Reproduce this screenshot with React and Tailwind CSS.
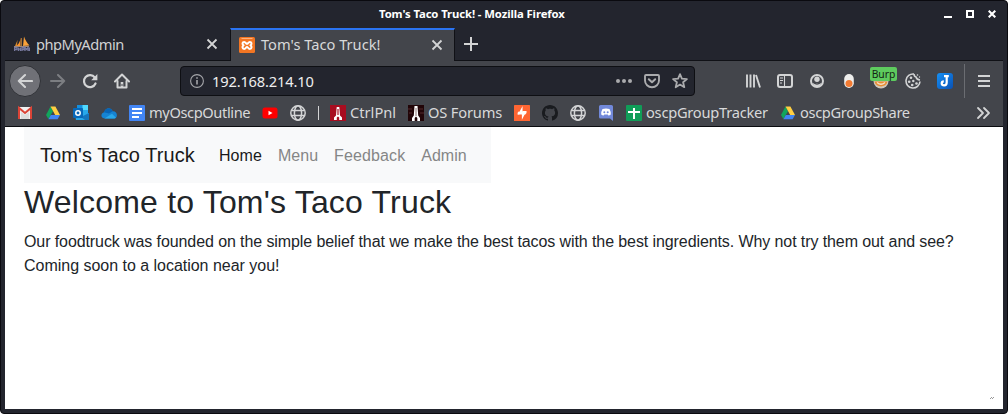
import React from "react";

function Ico({ children, className = "" }) {
  return (
    <svg viewBox="0 0 16 16" className={`block h-4 w-4 shrink-0 ${className}`} fill="none" aria-hidden="true">
      {children}
    </svg>
  );
}

const line = { stroke: "#d3d4d5", strokeWidth: 2, strokeLinecap: "round", strokeLinejoin: "round" };

const Sails = () => (
  <Ico>
    <path d="M6.5 0.5C6.8 4 5 8.5 1.5 10.5L6.5 10Z" fill="#f7922d" />
    <path d="M10 0.5C11 4 13.5 7.5 15.5 9.5L9 10Z" fill="#f9a13a" />
    <path d="M3.5 4L1 10H3Z" fill="#d78a2d" />
    <path d="M7.3 2V10" stroke="#c08038" />
    <path d="M0 10.5H15" stroke="#a58a78" strokeWidth="1" />
    <path d="M0.5 15V11.5H3V13.5H1M4.5 15V11.5M4.5 13.2H6.5M6.5 11.5V15M8 15V11.5H10V13.5H8M11 15V11.5L12.5 13.5L14 11.5V15M15.4 11.5V15" stroke="#77799e" strokeWidth="1.3" />
  </Ico>
);
const Xampp = () => (
  <Ico>
    <rect width="16" height="16" rx="1.5" fill="#f37623" />
    <path d="M2.5 1.5H13.5" stroke="#ffb27c" />
    <path d="M5.2 4.9C3.2 4.9 3 6.9 4.4 8.3C3 9.7 3.2 11.9 5.2 11.9C6.8 11.9 7 9.9 8 9.9C9 9.9 9.2 11.9 10.8 11.9C12.8 11.9 13 9.7 11.6 8.3C13 6.9 12.8 4.9 10.8 4.9C9.2 4.9 9 6.8 8 6.8C7 6.8 6.8 4.9 5.2 4.9Z" stroke="#fff" strokeWidth="2" />
  </Ico>
);
const CloseX = () => (
  <Ico><path d="M3.5 3.5L12.5 12.5M12.5 3.5L3.5 12.5" stroke="#d3d4d5" strokeWidth="1.8" /></Ico>
);
const Gmail = () => (
  <Ico>
    <rect x="1" y="2" width="14" height="12" rx="1" fill="#f1f1f1" />
    <path d="M4 14V7L8 10L12 7V14Z" fill="#dcdcdc" />
    <path d="M2 14V3L8 8L14 3V14" stroke="#db4437" strokeWidth="2" />
  </Ico>
);
const Drive = () => (
  <Ico>
    <path d="M5.5 1.5L8 6.2L3.4 14L1 10Z" fill="#11a55c" />
    <path d="M5.5 1.5H10.4L15 10H10.2Z" fill="#ffcf42" />
    <path d="M5.8 10H15L12.6 14.3H3.4Z" fill="#4185f3" />
  </Ico>
);
const Outlook = () => (
  <Ico>
    <rect x="4" y="0" width="11" height="11" fill="#1490df" />
    <rect x="9.5" y="0" width="5.5" height="5" fill="#50d9ff" />
    <rect x="9.5" y="5" width="5.5" height="4" fill="#28a8ea" />
    <path d="M2 9L16 8V15H3Z" fill="#28a8ea" />
    <path d="M8 12L16 8V15H12Z" fill="#1375bd" />
    <rect x="0" y="3" width="10" height="10" rx="1" fill="#0868b9" />
    <circle cx="5" cy="8" r="2.2" stroke="#fff" strokeWidth="1.5" />
  </Ico>
);
const Cloud = () => (
  <Ico>
    <path d="M3.5 13.4C-0.6 13.2-0.5 8 3.2 7.3C4.2 2.5 10 1.7 11.7 6.3C16.8 6 17.3 13.4 13 13.4Z" fill="#1683d2" />
    <path d="M3 7.3C4.8 2.2 10 1.9 11.7 6.3L8 8.6Z" fill="#0864b5" />
    <path d="M3.5 13.4L11 8.8L15 12.7C14.5 13.2 14 13.4 13 13.4Z" fill="#28a8ea" />
  </Ico>
);
const Docs = () => (
  <Ico>
    <rect width="16" height="16" rx="1" fill="#4285f4" />
    <path d="M3 4H13M3 8H13M3 12H10" stroke="#fff" strokeWidth="2" />
  </Ico>
);
const YouTube = () => (
  <Ico>
    <rect x="0.5" y="2.5" width="15" height="11" rx="2.5" fill="#f00" />
    <path d="M6.5 5.7L10.5 8L6.5 10.3Z" fill="#fff" />
  </Ico>
);
const Globe = () => (
  <Ico>
    <g stroke="#d3d4d5" strokeWidth="1.5">
      <circle cx="8" cy="8" r="7.2" />
      <ellipse cx="8" cy="8" rx="3.6" ry="7.2" />
      <path d="M1.5 5.5H14.5M1.5 10.5H14.5" />
    </g>
  </Ico>
);
const CtrlIcon = () => (
  <Ico>
    <rect width="16" height="16" fill="#a80d20" />
    <path d="M6.7 2H9.3L10 10.5L12 12.5V15H9.2V12.5L8 11.5L6.8 12.5V15H4V12.5L6 10.5Z" fill="#fff" />
    <path d="M8 4V10" stroke="#a80d20" strokeWidth="1.2" />
  </Ico>
);
const ForumIcon = () => (
  <Ico>
    <rect width="16" height="16" fill="#210508" />
    <path d="M0 4H4M1 8H4M11 4H15M12 8H16" stroke="#552b2d" />
    <path d="M6.5 1H9.5L10.2 10.5L12 13V16H9.3V13L8 11.5L6.7 13V16H4V13L5.8 10.5Z" fill="#fff" />
    <path d="M8 3V11" stroke="#8d7777" strokeWidth="1" />
  </Ico>
);
const Burp = () => (
  <Ico>
    <rect width="16" height="16" rx="0.6" fill="#ff6633" />
    <path d="M8.6 1V6.6H12.2L7.8 15V9.4H4Z" fill="#fff" />
    <path d="M9.2 6H12.5V8L10.8 10L9.5 8H7ZM3.6 9.8V7.8L5 6.2L6.5 8H9" fill="#fff" />
    <path d="M7 9.8V15M9.4 1V5.8" stroke="#ff6633" strokeWidth="0.8" />
  </Ico>
);
const GitHub = () => (
  <Ico>
    <path
      fill="#191b1f"
      d="M8 0C3.58 0 0 3.58 0 8c0 3.54 2.29 6.53 5.47 7.59.4.07.55-.17.55-.38 0-.19-.01-.82-.01-1.49-2.01.37-2.53-.49-2.69-.94-.09-.23-.48-.94-.82-1.13-.28-.15-.68-.52-.01-.53.63-.01 1.08.58 1.23.82.72 1.21 1.87.87 2.33.66.07-.52.28-.87.51-1.07-1.78-.2-3.64-.89-3.64-3.95 0-.87.31-1.59.82-2.15-.08-.2-.36-1.02.08-2.12 0 0 .67-.21 2.2.82.64-.18 1.32-.27 2-.27s1.36.09 2 .27c1.53-1.04 2.2-.82 2.2-.82.44 1.1.16 1.92.08 2.12.51.56.82 1.27.82 2.15 0 3.07-1.87 3.75-3.65 3.95.29.25.54.73.54 1.48 0 1.07-.01 1.93-.01 2.2 0 .21.15.46.55.38A8.01 8.01 0 0 0 16 8c0-4.42-3.58-8-8-8Z"
    />
  </Ico>
);
const Discord = () => (
  <Ico>
    <path d="M2.6 0H13.4Q15 0 15 1.6V16L12 13.6H2.6Q1 13.6 1 12V1.6Q1 0 2.6 0Z" fill="#7289da" />
    <path d="M4.5 4Q8 2.8 11.5 4Q13 6.5 12.8 9.5Q11.5 10.6 10.4 10.5L9.7 9.6H6.3L5.6 10.5Q4.5 10.6 3.2 9.5Q3 6.5 4.5 4Z" fill="#fff" />
    <circle cx="6.3" cy="7.2" r="1" fill="#7289da" />
    <circle cx="9.7" cy="7.2" r="1" fill="#7289da" />
  </Ico>
);
const Sheets = () => (
  <Ico>
    <rect width="16" height="16" rx="1" fill="#109d58" />
    <path d="M8 3V14M2 7H14" stroke="#fff" strokeWidth="2" />
  </Ico>
);

function Bookmark({ icon, label, className = "" }) {
  return (
    <div className={`flex shrink-0 items-center gap-1 ${className}`}>
      {icon}
      {label && <span className="-mt-[3px] whitespace-nowrap text-[14.67px] leading-5 text-[#d8d9da]">{label}</span>}
    </div>
  );
}

function TitleBar() {
  return (
    <header className="flex h-[27px] items-center pr-[7px] pl-[374px]">
      <h1 className="-mt-px text-[11.3px] leading-4 font-bold tracking-[-0.09px] whitespace-nowrap text-white">Tom's Taco Truck! - Mozilla Firefox</h1>
      <div className="-mt-px ml-auto flex gap-[14px]">
        <svg className="h-2 w-2" viewBox="0 0 8 8"><path d="M0 7H8" stroke="#fff" strokeWidth="2" /></svg>
        <svg className="h-2 w-2" viewBox="0 0 8 8"><path d="M1 1H7V7H1Z" fill="none" stroke="#fff" strokeWidth="2" /></svg>
        <svg className="h-2 w-2" viewBox="0 0 8 8"><path d="M0.7 0.7L7.3 7.3M7.3 0.7L0.7 7.3" stroke="#fff" strokeWidth="2.1" /></svg>
      </div>
    </header>
  );
}

function Tabs() {
  return (
    <div className="flex h-[33px] bg-[#23252e] text-[14.67px]">
      <div className="flex w-[225px] items-center border-b border-[#101116] pr-[10px] pl-[9px]">
        <Sails />
        <span className="ml-[6px] flex-1 tracking-[-0.5px] text-[#d0d1d3]">phpMyAdmin</span>
        <CloseX />
      </div>
      <div className="flex w-[225px] items-center border-t-2 border-r border-l border-t-[#2b74f2] border-r-[#101116] border-l-[#101116] bg-[#43454b] pr-[9px] pb-px pl-[8px]">
        <Xampp />
        <span className="-mt-[2px] ml-[6px] flex-1 text-[#d8d9da]">Tom's Taco Truck!</span>
        <CloseX />
      </div>
      <div className="flex flex-1 items-center border-b border-[#101116] pl-[8px]">
        <Ico><path d="M8 1V15M1 8H15" stroke="#d3d4d5" strokeWidth="2" /></Ico>
      </div>
    </div>
  );
}

function AddressBar() {
  return (
    <div className="flex h-[30px] w-[515px] items-center rounded-[4px] border border-[#0e0f13] bg-[#23252e] pr-[6px] pl-[8px]">
      <Ico>
        <circle cx="8" cy="8" r="6.4" stroke="#a5a6aa" strokeWidth="1.1" />
        <path d="M8 7V11.5M8 4.2V5.8" stroke="#a5a6aa" strokeWidth="1.6" />
      </Ico>
      <span className="ml-[7px] flex-1 text-[14.67px] tracking-[-0.17px] text-[#eeeeee]">192.168.214.10</span>
      <div className="flex gap-3">
        <Ico>
          <g fill="#aaabad"><circle cx="2" cy="8" r="2" /><circle cx="8" cy="8" r="2" /><circle cx="14" cy="8" r="2" /></g>
        </Ico>
        <Ico>
          <path d="M1 3Q1 2 2 2H14Q15 2 15 3V7.5A7 6.7 0 0 1 1 7.5Z" stroke="#aaabad" strokeWidth="1.9" />
          <path d="M4.8 6.2L8 9.2L11.2 6.2" stroke="#aaabad" strokeWidth="2" strokeLinecap="round" strokeLinejoin="round" />
        </Ico>
        <Ico>
          <path d="M8 1.2L9.9 5.7L14.9 6.1L11.1 9.3L12.3 14.2L8 11.6L3.7 14.2L4.9 9.3L1.1 6.1L6.1 5.7Z" stroke="#aaabad" strokeWidth="1.8" strokeLinejoin="round" />
        </Ico>
      </div>
    </div>
  );
}

function Toolbar() {
  return (
    <div className="flex h-10 items-center pl-1">
      <div className="flex h-8 w-8 items-center justify-center rounded-full border border-[#303237] bg-[#707177]">
        <Ico><path d="M15 8H1.8M8 2L1.8 8L8 14" {...line} strokeWidth="2.1" /></Ico>
      </div>
      <div className="ml-[9px] flex gap-4">
        <Ico className="opacity-40"><path d="M1 8H14.2M8 2L14.2 8L8 14" {...line} /></Ico>
        <Ico>
          <path d="M12.8 4.5A6 6 0 1 0 13.5 10.5" {...line} strokeWidth="2.2" />
          <path d="M15.4 1V7.2H9.2Z" fill="#d3d4d5" />
        </Ico>
        <Ico>
          <path d="M1 8.5L8 1.5L15 8.5" {...line} />
          <path d="M3.5 8V14.5H12.5V8" {...line} />
          <path d="M8 9V14" stroke="#d3d4d5" strokeWidth="2.6" />
          <path d="M8 11V13" stroke="#43454b" strokeWidth="1" />
        </Ico>
      </div>
      <div className="ml-[50px]"><AddressBar /></div>
      <div className="ml-[50px] flex gap-4">
        <Ico><path d="M2 1.5V14.5M5.5 1.5V14.5M9 1.5V14.5M11 2L15 14.5" stroke="#d3d4d5" strokeWidth="1.9" /></Ico>
        <Ico>
          <rect x="1" y="2" width="14" height="12" rx="2" stroke="#d3d4d5" strokeWidth="2" />
          <path d="M7.5 2V14M3 5H6M3 7.5H6M3 10H5" stroke="#d3d4d5" strokeWidth="1.1" />
        </Ico>
        <Ico>
          <circle cx="8" cy="8" r="6" stroke="#d3d4d5" strokeWidth="2" />
          <circle cx="8" cy="6.2" r="2.7" fill="#d3d4d5" />
          <path d="M3.5 10H12.5Q11 13.5 8 13.5Q5 13.5 3.5 10Z" fill="#d3d4d5" />
          <path d="M4.5 9.8Q8 12.2 11.5 9.8" stroke="#43454b" strokeWidth="1.3" />
        </Ico>
        <Ico>
          <rect x="3.2" y="1" width="9.6" height="14" rx="4.8" fill="#eeeeec" />
          <circle cx="8" cy="10.5" r="3.5" fill="#f47b32" />
        </Ico>
        <div className="relative h-4 w-4">
          <Ico>
            <circle cx="8" cy="8" r="7.5" fill="#cfc7bb" />
            <path d="M1.5 8.5C3 15 13 15 14.5 8.5Z" fill="#e98b30" />
            <path d="M4 9.5Q8 13 12 9.5" stroke="#f4e2c9" strokeWidth="1.5" />
          </Ico>
          <span className="absolute -top-[6px] -left-[3px] flex h-[14px] w-[27px] items-center justify-center rounded-[2px] bg-[#5ecb5e] text-[10.3px] leading-none text-[#142414]">Burp</span>
        </div>
        <Ico>
          <path d="M9 1.1A7 7 0 1 0 15 8.5M9 1.1Q9 3.5 11 4Q11.5 6.5 15 7" stroke="#d3d4d5" strokeWidth="1.6" />
          <g fill="#d3d4d5">
            <circle cx="6" cy="4.8" r="1.3" /><circle cx="4.2" cy="8.8" r="1.3" /><circle cx="8.3" cy="8" r="1.2" />
            <circle cx="7.2" cy="12" r="1.3" /><circle cx="11.5" cy="10.5" r="1.3" /><circle cx="12.5" cy="2" r="0.8" /><circle cx="14.5" cy="4" r="0.7" />
          </g>
        </Ico>
        <Ico>
          <defs>
            <linearGradient id="noteBlue" x1="0" y1="0" x2="1" y2="1">
              <stop offset="0" stopColor="#1590f5" />
              <stop offset="1" stopColor="#0a51b4" />
            </linearGradient>
          </defs>
          <rect width="16" height="16" rx="3" fill="url(#noteBlue)" />
          <path d="M7 3.2H11.8M9.7 3V9.6Q9.7 12.4 7.2 12.4Q4.7 12.4 4.7 10.2Q4.7 8.3 6.8 8.3" stroke="#fff" strokeWidth="2.2" />
        </Ico>
      </div>
      <div className="ml-[11px] h-[34px] w-px bg-[#6b6d72]" />
      <Ico className="ml-[11px]"><path d="M2 3H14M2 8H14M2 13H14" stroke="#d3d4d5" strokeWidth="2" /></Ico>
    </div>
  );
}

function Bookmarks() {
  return (
    <div className="flex h-[26px] items-center gap-3 border-b border-[#0b0c10] pr-[12px] pb-px pl-3">
      <Bookmark icon={<Gmail />} />
      <Bookmark icon={<Drive />} />
      <Bookmark icon={<Outlook />} />
      <Bookmark icon={<Cloud />} />
      <Bookmark icon={<Docs />} label="myOscpOutline" className="w-[121px] tracking-[-0.4px]" />
      <Bookmark icon={<YouTube />} />
      <Bookmark icon={<Globe />} />
      <div className="-mr-px h-[14px] w-px bg-[#d3d4d5]" />
      <Bookmark icon={<CtrlIcon />} label="CtrlPnl" className="w-[66px]" />
      <Bookmark icon={<ForumIcon />} label="OS Forums" className="w-[94px] tracking-[-0.17px]" />
      <Bookmark icon={<Burp />} />
      <Bookmark icon={<GitHub />} />
      <Bookmark icon={<Globe />} />
      <Bookmark icon={<Discord />} />
      <Bookmark icon={<Sheets />} label="oscpGroupTracker" className="w-[142px] tracking-[-0.25px]" />
      <Bookmark icon={<Drive />} label="oscpGroupShare" className="tracking-[-0.35px]" />
      <Ico className="ml-auto"><path d="M3 3L8 8L3 13M9 3L14 8L9 13" {...line} strokeWidth="1.8" /></Ico>
    </div>
  );
}

function Page() {
  return (
    <main className="flex-1 bg-white px-[19px] font-['Liberation_Sans',Arial,sans-serif] text-[#212529]">
      <nav className="flex h-14 w-[467px] items-center bg-[#f8f9fa] px-4">
        <a className="mr-4 text-[20px] leading-[30px] tracking-[0.09px] text-[#1a1a1a]">Tom's Taco Truck</a>
        <div className="flex pt-[2px] text-base text-[#858686]">
          <a className="px-2 tracking-[0.1px] text-[#1a1a1a]">Home</a>
          <a className="px-2">Menu</a>
          <a className="px-2 tracking-[0.12px]">Feedback</a>
          <a className="px-2">Admin</a>
        </div>
      </nav>
      <h2 className="mb-[9px] text-[32px] leading-[38.4px] tracking-[0.185px]">Welcome to Tom's Taco Truck</h2>
      <p className="text-base leading-6 tracking-[-0.093px]">
        Our foodtruck was founded on the simple belief that we make the best tacos with the best ingredients. Why not try them out and see?
        <br />
        <span className="tracking-[-0.02px]">Coming soon to a location near you!</span>
      </p>
    </main>
  );
}

export default function App() {
  return (
    <div className="h-[414px] w-[1008px] bg-white">
      <div className="relative flex h-full flex-col overflow-hidden rounded-[4px] border border-[#0a0a0f] bg-[#23252e] px-1 pb-1 font-['Noto_Sans',sans-serif]">
        <TitleBar />
        <Tabs />
        <div className="bg-[#43454b]">
          <Toolbar />
          <Bookmarks />
        </div>
        <Page />
        <svg viewBox="0 0 4 3" className="absolute right-[13px] bottom-[14px] h-[3px] w-1">
          <path d="M0 2.5H1M1 1.5H2M2 2.5H3M3 1.5H4" stroke="#999" />
        </svg>
      </div>
    </div>
  );
}
